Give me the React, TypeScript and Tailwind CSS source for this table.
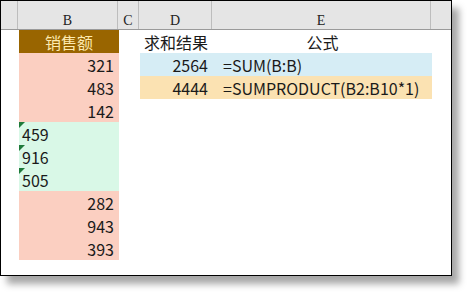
const cols = [
  { label: "", w: "w-[17px]" },
  { label: "B", w: "w-[100px]" },
  { label: "C", w: "w-[21px]" },
  { label: "D", w: "w-[73px]" },
  { label: "E", w: "w-[219px]" },
  { label: "", w: "flex-1" },
]

const pink = ["321", "483", "142"]
const green = ["459", "916", "505"]
const pink2 = ["282", "943", "393"]

function Row({ b, d, e }: { b: React.ReactNode; d?: React.ReactNode; e?: React.ReactNode }) {
  return (
    <div className="flex h-[23px]">
      <div className="w-[18px]" />
      {b}
      <div className="w-[21px]" />
      {d ?? <div className="w-[73px]" />}
      {e ?? <div className="w-[219px]" />}
    </div>
  )
}

function PinkCell({ v }: { v: string }) {
  return (
    <div className="w-[100px] bg-[#fbcfc1] flex items-center justify-end pr-[5px]">{v}</div>
  )
}

function GreenCell({ v }: { v: string }) {
  return (
    <div className="relative w-[100px] bg-[#d9f8e7] flex items-center pl-[3px]">
      <div className="absolute left-0 top-0 w-0 h-0 border-t-[6px] border-r-[6px] border-t-[#1e7a3a] border-r-transparent" />
      {v}
    </div>
  )
}

export default function App() {
  return (
    <div className="w-[473px] h-[298px] bg-white" style={{ fontFamily: '"Noto Sans CJK SC", "Noto Sans", sans-serif' }}>
      <div className="w-[452px] h-[276px] border border-black bg-white shadow-[7px_8px_7px_rgba(0,0,0,0.35)] overflow-hidden text-[16px] text-[#1a1a1a] leading-none">
        <div className="flex h-[29px] bg-[#e5e5e5] border-b border-[#9a9a9a]">
          {cols.map((c, i) => (
            <div
              key={i}
              className={`${c.w} flex items-end justify-center pb-[1px] text-[14px] text-[#222] ${i < cols.length - 1 ? "border-r border-[#bdbdbd]" : ""}`}
              style={{ fontFamily: '"Liberation Serif", serif' }}
            >
              {c.label}
            </div>
          ))}
        </div>
        <Row
          b={<div className="w-[100px] bg-[#996500] text-[#fdeab0] flex items-center justify-center">销售额</div>}
          d={<div className="w-[73px] flex items-center pl-[4px]">求和结果</div>}
          e={<div className="w-[219px] flex items-center justify-center">公式</div>}
        />
        <Row
          b={<PinkCell v={pink[0]} />}
          d={<div className="w-[73px] bg-[#d6edf5] flex items-center justify-end pr-[5px]">2564</div>}
          e={<div className="w-[219px] bg-[#d6edf5] flex items-center pl-[10px]">=SUM(B:B)</div>}
        />
        <Row
          b={<PinkCell v={pink[1]} />}
          d={<div className="w-[73px] bg-[#fbe2b2] flex items-center justify-end pr-[5px]">4444</div>}
          e={<div className="w-[219px] bg-[#fbe2b2] flex items-center pl-[10px]">=SUMPRODUCT(B2:B10*1)</div>}
        />
        <Row b={<PinkCell v={pink[2]} />} />
        {green.map((v) => (
          <Row key={v} b={<GreenCell v={v} />} />
        ))}
        {pink2.map((v) => (
          <Row key={v} b={<PinkCell v={v} />} />
        ))}
      </div>
    </div>
  )
}
